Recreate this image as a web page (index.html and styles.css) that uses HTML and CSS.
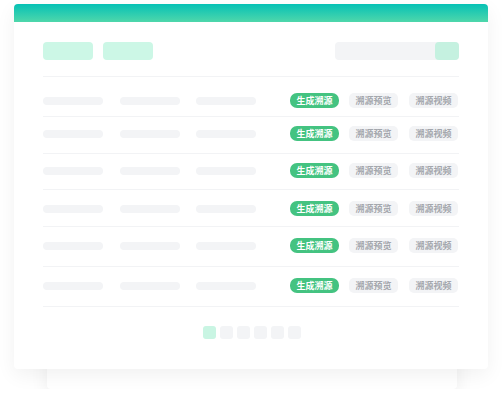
FILE: index.html
```html
<!DOCTYPE html>
<html lang="zh-CN">
<head>
    <meta charset="UTF-8">
    <meta name="viewport" content="width=device-width, initial-scale=1.0">
    <title>溯源列表</title>
    <link rel="stylesheet" href="styles.css">
</head>
<body>
    <div class="stage">
        <section class="panel">
            <div class="panel-head"></div>
            <div class="panel-body">
                <div class="toolbar">
                    <span class="chip"></span>
                    <span class="chip"></span>
                    <div class="search">
                        <span class="search-btn"></span>
                    </div>
                </div>

                <ul class="rows">
                    <li class="row">
                        <span class="bar"></span><span class="bar"></span><span class="bar"></span>
                        <div class="actions">
                            <span class="btn btn-main">生成溯源</span>
                            <span class="btn">溯源预览</span>
                            <span class="btn">溯源视频</span>
                        </div>
                    </li>
                    <li class="row">
                        <span class="bar"></span><span class="bar"></span><span class="bar"></span>
                        <div class="actions">
                            <span class="btn btn-main">生成溯源</span>
                            <span class="btn">溯源预览</span>
                            <span class="btn">溯源视频</span>
                        </div>
                    </li>
                    <li class="row">
                        <span class="bar"></span><span class="bar"></span><span class="bar"></span>
                        <div class="actions">
                            <span class="btn btn-main">生成溯源</span>
                            <span class="btn">溯源预览</span>
                            <span class="btn">溯源视频</span>
                        </div>
                    </li>
                    <li class="row">
                        <span class="bar"></span><span class="bar"></span><span class="bar"></span>
                        <div class="actions">
                            <span class="btn btn-main">生成溯源</span>
                            <span class="btn">溯源预览</span>
                            <span class="btn">溯源视频</span>
                        </div>
                    </li>
                    <li class="row">
                        <span class="bar"></span><span class="bar"></span><span class="bar"></span>
                        <div class="actions">
                            <span class="btn btn-main">生成溯源</span>
                            <span class="btn">溯源预览</span>
                            <span class="btn">溯源视频</span>
                        </div>
                    </li>
                    <li class="row">
                        <span class="bar"></span><span class="bar"></span><span class="bar"></span>
                        <div class="actions">
                            <span class="btn btn-main">生成溯源</span>
                            <span class="btn">溯源预览</span>
                            <span class="btn">溯源视频</span>
                        </div>
                    </li>
                </ul>

                <div class="pager">
                    <span class="page active"></span>
                    <span class="page"></span>
                    <span class="page"></span>
                    <span class="page"></span>
                    <span class="page"></span>
                    <span class="page"></span>
                </div>
            </div>
        </section>
        <div class="panel-back"></div>
    </div>
</body>
</html>
```

FILE: styles.css
```css
body {
    margin: 0;
    background: #ffffff;
    font-family: "Noto Sans CJK SC", "Noto Sans", sans-serif;
}
.stage {
    padding: 4px 14px 0;
}
.panel {
    position: relative;
    z-index: 1;
    background: #ffffff;
    border-radius: 4px;
    box-shadow: 0 6px 20px rgba(0, 0, 0, 0.06);
    overflow: hidden;
}
.panel-head {
    height: 18px;
    background: linear-gradient(to bottom, #05c1b5, #4fd7ab);
}
.panel-body {
    padding: 20px 29px 30px;
}
.panel-back {
    height: 40px;
    margin: -20px 31px 0 33px;
    background: #ffffff;
    border-radius: 0 0 4px 4px;
    box-shadow: 0 6px 18px rgba(0, 0, 0, 0.07);
}

/* top bar: two filter chips and a search box */
.toolbar {
    display: flex;
    align-items: center;
    gap: 10px;
    padding-bottom: 16px;
    border-bottom: 1px solid #f2f3f5;
}
.chip {
    width: 50px;
    height: 18px;
    border-radius: 4px;
    background: #ccf7e6;
}
.search {
    display: flex;
    justify-content: flex-end;
    width: 124px;
    height: 18px;
    margin-left: auto;
    border-radius: 4px;
    background: #f3f4f6;
}
.search-btn {
    width: 24px;
    border-radius: 4px;
    background: #c5f1e0;
}

/* list */
.rows {
    list-style: none;
    margin: 0;
    padding: 0;
}
.row {
    display: flex;
    align-items: center;
    padding: 11px 0 12px;
    border-bottom: 1px solid #f2f3f5;
}
.row:nth-child(1) { padding: 16px 0 8px; }
.row:nth-child(2) { padding: 9px 0 12px; }
.row:nth-child(3) { padding: 9px 0 11px; }
.row:nth-child(4) { padding: 11px 0 10px; }
.row:nth-child(5),
.row:nth-child(6) { padding: 11px 0 13px; }
.bar {
    width: 60px;
    height: 8px;
    margin-right: 16px;
    border-radius: 4px;
    background: #f3f4f6;
}
.bar:first-child {
    margin-right: 17px;
}
.actions {
    display: flex;
    gap: 10px;
    margin-left: auto;
    margin-right: 1px;
}
.btn {
    width: 49px;
    height: 15px;
    border-radius: 5px;
    background: #f3f4f6;
    color: #a4a7ad;
    font-size: 9px;
    font-weight: 700;
    line-height: 15px;
    text-align: center;
}
.btn:last-child {
    margin-left: 1px;
}
.btn-main {
    border-radius: 7px;
    background: #44c381;
    color: #ffffff;
}

/* pagination */
.pager {
    display: flex;
    justify-content: center;
    gap: 4px;
    margin-top: 19px;
    padding-left: 2px;
}
.page {
    width: 13px;
    height: 13px;
    border-radius: 3px;
    background: #f3f4f6;
}
.page.active {
    background: #c9f5e3;
}
```
